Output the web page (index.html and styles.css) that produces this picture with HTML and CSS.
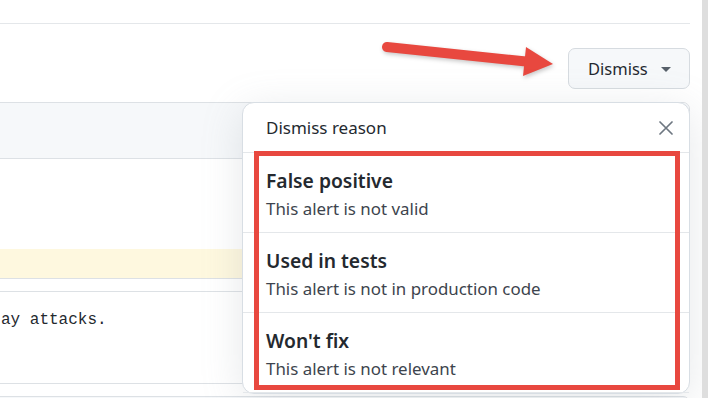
FILE: index.html
```html
<!DOCTYPE html>
<html lang="en">
<head>
    <meta charset="UTF-8">
    <meta name="viewport" content="width=device-width, initial-scale=1.0">
    <title>Dismiss alert</title>
    <link rel="stylesheet" href="styles.css">
</head>
<body>
    <div class="screen">
        <div class="page">
            <div class="topbar"></div>

            <div class="toolbar">
                <button class="btn">Dismiss <span class="caret"></span></button>
            </div>

            <div class="box">
                <div class="box-head"></div>
                <div class="box-body"></div>
                <div class="box-hl"></div>
            </div>

            <div class="box box-code">
                <pre>ay attacks.</pre>
            </div>

            <div class="box box-next"></div>

            <!-- flecha roja que apunta al botón -->
            <svg class="arrow" width="180" height="48" viewBox="0 0 180 48">
                <line x1="7" y1="9" x2="146" y2="23.5" stroke="#e8483f" stroke-width="10" stroke-linecap="round"/>
                <polygon points="146,9 143,38 173,26" fill="#e8483f"/>
            </svg>

            <!-- menú desplegable -->
            <div class="menu">
                <div class="menu-head">
                    <span>Dismiss reason</span>
                    <svg class="close" width="14" height="14" viewBox="0 0 14 14">
                        <path d="M1 1 L13 13 M13 1 L1 13" stroke="#6e7781" stroke-width="1.7" stroke-linecap="round"/>
                    </svg>
                </div>
                <div class="menu-item">
                    <div class="item-title">False positive</div>
                    <div class="item-desc">This alert is not valid</div>
                </div>
                <div class="menu-item">
                    <div class="item-title">Used in tests</div>
                    <div class="item-desc">This alert is not in production code</div>
                </div>
                <div class="menu-item">
                    <div class="item-title">Won't fix</div>
                    <div class="item-desc">This alert is not relevant</div>
                </div>
                <div class="highlight"></div>
            </div>
        </div>
        <div class="scrollbar"></div>
    </div>
</body>
</html>
```

FILE: styles.css
```css
body, html {
    margin: 0;
    padding: 0;
}

body {
    font-family: "Noto Sans", "Open Sans", sans-serif;
    color: #24292f;
    background-color: #fff;
}

.screen {
    display: flex;
    width: 708px;
    height: 398px;
    overflow: hidden;
}

.page {
    position: relative;
    flex-grow: 1;
    padding-right: 12px;
    overflow: hidden;
}

.scrollbar {
    width: 6px;
    background-color: #dedede;
}

.topbar {
    height: 24px;
    box-sizing: border-box;
    border-bottom: 1px solid #e4e7ea;
}

.toolbar {
    display: flex;
    justify-content: flex-end;
    height: 78px;
    padding-top: 24px;
    box-sizing: border-box;
}

.btn {
    display: flex;
    align-items: center;
    gap: 13px;
    width: 122px;
    height: 41px;
    padding: 0 0 0 19px;
    box-sizing: border-box;
    font-family: inherit;
    font-size: 16.5px;
    color: #24292f;
    background-color: #f6f8fa;
    border: 1px solid #d6dbe0;
    border-radius: 7px;
}

.caret {
    width: 0;
    height: 0;
    border-left: 5px solid transparent;
    border-right: 5px solid transparent;
    border-top: 5px solid #57606a;
    margin-top: 2px;
}

.box {
    margin-left: -20px;
    border: 1px solid #dde1e5;
    border-radius: 7px;
    overflow: hidden;
}

.box-head {
    height: 55px;
    background-color: #f6f8fa;
    border-bottom: 1px solid #dde1e5;
}

.box-body {
    height: 90px;
}

.box-hl {
    height: 29px;
    background-color: #fef8df;
}

.box-code {
    margin-top: 12px;
    height: 91px;
    box-sizing: content-box;
}

.box-code pre {
    margin: 0;
    padding: 17px 0 0 20px;
    font-family: "Liberation Mono", "DejaVu Sans Mono", monospace;
    font-size: 16px;
    line-height: 22px;
    color: #24292f;
}

.box-next {
    margin-top: 12px;
    height: 40px;
    background-color: #f6f8fa;
}

.arrow {
    position: absolute;
    left: 380px;
    top: 38px;
    filter: drop-shadow(1px 2px 2px rgba(0, 0, 0, 0.22));
}

.menu {
    position: absolute;
    left: 242px;
    top: 102px;
    width: 448px;
    box-sizing: border-box;
    background-color: #fff;
    border: 1px solid #d8dee4;
    border-radius: 12px;
    box-shadow: 0 8px 40px rgba(140, 149, 159, 0.22);
}

.menu-head {
    display: flex;
    justify-content: space-between;
    align-items: center;
    height: 49px;
    padding: 0 16px 0 23px;
    border-bottom: 1px solid #e4e7ea;
    font-size: 17px;
}

.menu-item {
    height: 80px;
    padding: 15px 0 0 23px;
    box-sizing: border-box;
    border-bottom: 1px solid #e4e7ea;
}

.menu-item:last-of-type {
    height: 78px;
    border-bottom: none;
}

.item-title {
    font-size: 19.3px;
    font-weight: 600;
    line-height: 25px;
}

.item-desc {
    margin-top: 4px;
    font-size: 16.9px;
    line-height: 23px;
    color: #3d444d;
}

/* marco rojo encima de las opciones */
.highlight {
    position: absolute;
    left: 11px;
    top: 48px;
    width: 426px;
    height: 239px;
    box-sizing: border-box;
    border: 5px solid #e8483f;
}
```
